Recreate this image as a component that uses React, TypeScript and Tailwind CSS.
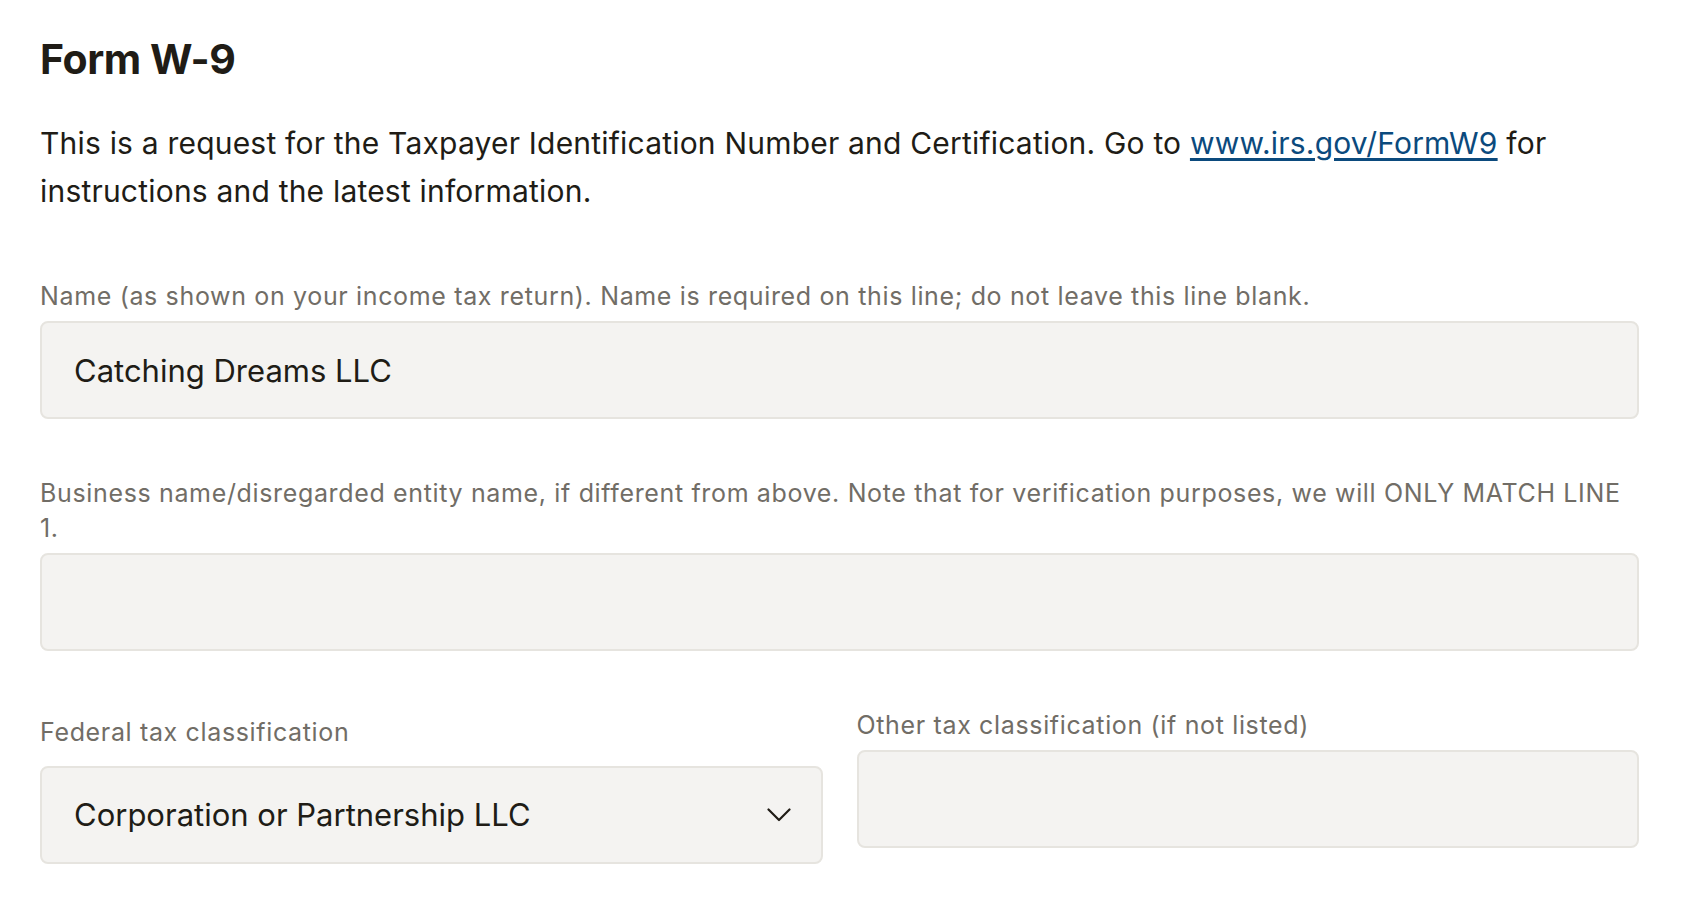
import React from "react";

const labelCls =
  "block text-[25px] leading-[35px] tracking-[0.65px] text-[#716d66] font-['Inter',sans-serif]";
const boxCls =
  "w-full h-[98px] rounded-[8px] border-2 border-[#e6e4df] bg-[#f4f3f1] px-[32px] text-[31px] text-[#201c16] outline-none font-['Inter',sans-serif]";

function Field({
  label,
  value,
}: {
  label: string;
  value?: string;
}) {
  return (
    <div className="flex flex-col">
      <label className={labelCls}>{label}</label>
      <input className={`${boxCls} mt-[7px]`} defaultValue={value} />
    </div>
  );
}

export default function App() {
  return (
    <div className="min-h-screen bg-white pl-[40px] pr-[45px] pt-[35px] font-['Inter',sans-serif] text-[#201c16]">
      <h1 className="text-[41px] leading-[48px] font-bold tracking-[-0.01em]">
        Form W-9
      </h1>

      <p className="mt-[36px] text-[30px] leading-[48px] tracking-[0.2px]">
        <span>
          This is a request for the Taxpayer Identification Number and
          Certification. Go to
        </span>{" "}
        <a href="#" className="text-[#0b4a7d] underline underline-offset-[4px]">
          www.irs.gov/FormW9
        </a>{" "}
        <span>for</span>{" "}
        <span>instructions and the latest information.</span>
      </p>

      <div className="mt-[64px] flex flex-col gap-[57px]">
        <Field
          label="Name (as shown on your income tax return). Name is required on this line; do not leave this line blank."
          value="Catching Dreams LLC"
        />
        <Field label="Business name/disregarded entity name, if different from above. Note that for verification purposes, we will ONLY MATCH LINE 1." />

        <div className="grid grid-cols-2 gap-x-[34px] items-start">
          <div className="flex flex-col pt-[7px]">
            <label className={labelCls}>Federal tax classification</label>
            <div className="relative mt-[16px]">
              <select
                className={`${boxCls} h-[94px] appearance-none`}
                defaultValue="corp"
              >
                <option value="corp">Corporation or Partnership LLC</option>
                <option value="sole">Individual/sole proprietor</option>
                <option value="c">C Corporation</option>
                <option value="s">S Corporation</option>
                <option value="trust">Trust/estate</option>
              </select>
              <svg
                className="pointer-events-none absolute right-[32px] top-1/2 -translate-y-1/2"
                width="24"
                height="14"
                viewBox="0 0 24 14"
                fill="none"
              >
                <path
                  d="M1.5 1.5L12 12L22.5 1.5"
                  stroke="#201c16"
                  strokeWidth="2.2"
                  strokeLinecap="round"
                  strokeLinejoin="round"
                />
              </svg>
            </div>
          </div>
          <Field label="Other tax classification (if not listed)" />
        </div>
      </div>
    </div>
  );
}
